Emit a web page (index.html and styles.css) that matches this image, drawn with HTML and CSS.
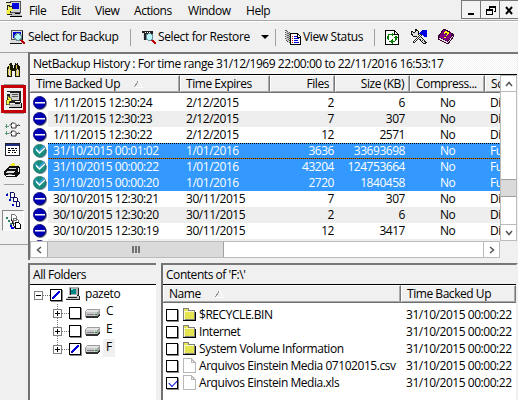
FILE: index.html
```html
<!DOCTYPE html>
<html lang="en">
<head>
<meta charset="utf-8">
<title>NetBackup</title>
<link rel="stylesheet" href="styles.css">
</head>
<body>
<svg class="defs" width="0" height="0">
  <defs>
    <pattern id="dither" width="2" height="2" patternUnits="userSpaceOnUse"><rect width="2" height="2" fill="#ff0"/><path d="M0 0h1v1H0zM1 1h1v1H1z" fill="#c8c8a0"/></pattern>
    <symbol id="bar" viewBox="0 0 14 14"><circle cx="7.5" cy="7.5" r="6.400" fill="#888"/><circle cx="6.6" cy="6.6" r="6.2" fill="#0000b4" stroke="#000068" stroke-width=".8"/><path d="M2 6h10v1.500H2z" fill="#fff"/></symbol>
    <symbol id="ok" viewBox="0 0 14 14"><circle cx="7.5" cy="7.5" r="6.400" fill="#66909c"/><circle cx="6.6" cy="6.6" r="6.2" fill="#159080" stroke="#267060" stroke-width=".8"/><path d="M2 3.5L6 7.500l5.500-6" fill="none" stroke="#4aa5e6" stroke-width="1.500"/><path d="M3 5.500l3.500 3.500L12 4" fill="none" stroke="#fff" stroke-width="1.300"/></symbol>
    <symbol id="drive" viewBox="0 0 16 10"><path d="M0 4l3-3h12v5l-3 3H0z" fill="#a0a0a0"/><path d="M0 4l3-3h12l-2 3z" fill="#e4e4e4"/><path d="M0 4h12v4H0z" fill="#c8c8c8"/><path d="M12 8l3-3v2l-3 3H1V8z" fill="#303030"/><path d="M2 6h7" stroke="#808080"/><path d="M10 6h2v1h-2z" fill="#208020"/><path d="M0 8V4l3-3h12" fill="none" stroke="#808080" stroke-width=".7"/></symbol>
    <symbol id="folder" viewBox="0 0 14 14"><path d="M1 12V3l1-2h4l1 2h5v9z" fill="url(#dither)" stroke="#808080"/><path d="M1 13h12V4" fill="none" stroke="#000"/><path d="M2 12V4h10" fill="none" stroke="#fff" stroke-width=".7"/></symbol>
    <symbol id="gfolder" viewBox="0 0 14 14"><path d="M1 12V3l1-2h4l1 2h5v9z" fill="url(#dither)" stroke="#808080"/><path d="M1 13h12V4" fill="none" stroke="#000"/><path d="M2 12V4h10" fill="none" stroke="#fff" stroke-width=".7"/></symbol>
    <symbol id="file" viewBox="0 0 13 15"><path d="M.5.5h8l4 4v10H.5zM8.500.5v4h4" fill="#fff" stroke="#b8b8b8"/></symbol>
    <symbol id="app" viewBox="0 0 16 16"><path d="M4 0h11v11H4z" fill="#d0d0d0"/><path d="M6 2h7v6H6z" fill="#0000e0"/><path d="M4 .5h11M14.500 1v10H5" fill="none" stroke="#555"/><path d="M3 12h12l1 3H5z" fill="#c0c0c0"/><path d="M4 15.500h12V12M9 12h5" fill="none" stroke="#000"/><path d="M0 2h6v2H0zM0 7h2v6H0z" fill="#e8e8b0"/><path d="M0 1.500h5M1 4l5 2v2l-2 1v3M1 13h5M1 5v7" stroke="#222" fill="none"/><path d="M2 5l4 2 1 2-3 1v3H1v-4l2-1z" fill="#f4f040"/></symbol>
    <symbol id="appdark" viewBox="0 0 16 16"><path d="M2 0h13v11H2z" fill="#222"/><path d="M5 2h8v6H5z" fill="#d0d0d0"/><path d="M7 3h5v1H7zM7 5h5v1H7z" fill="#555"/><path d="M3 12h12l1 3H5z" fill="#c0c0c0"/><path d="M4 15.500h12V11M9 12h5" fill="none" stroke="#000"/><path d="M0 1h5v2H0zM0 6h2v6H0z" fill="#eee"/><path d="M2 4l4 3 1 2-3 1v3H1V9l2-1z" fill="#f4f040" stroke="#222" stroke-width=".6"/><path d="M9 9h5v1H9z" fill="#fff"/></symbol>
    <symbol id="bino" viewBox="0 0 15 17"><path d="M3 1h3v2h1v3h1V3h1V1h3v2l2 2v10H9v-6H6v6H1V5l2-2z" fill="#181800"/><path d="M3 3h1v4H3zM10 3h1v4h-1zM2 7h1v6H2zM4 8h1v6H4zM10 8h1v6h-1zM12 8h1v6h-1z" fill="#d8c850"/><path d="M3 1h1v1H3zM10 1h1v1h-1zM3 7h1v7H3zM11 7h1v7h-1z" fill="#ddd"/></symbol>
    <symbol id="tree" viewBox="0 0 16 15"><path d="M0 4h4M1.500 2v4M0 11h4M1.500 9v4" stroke="#569a78"/><path d="M4.500 3h2V1h3l1.500 1.500V6H6.500V4M11 4h1l1-1h1l1 1M4.500 11h2V9h3l1.500 1.500V14H6.500v-2M11 12h1l1-1h1l1 1" fill="#fff" stroke="#333" shape-rendering="auto"/></symbol>
    <symbol id="cal" viewBox="0 0 15 13"><path d="M.5.5h14v12H.5z" fill="#fff" stroke="#223"/><path d="M1 1h13v2H1z" fill="#203080"/><path d="M3 5.500h2m1 0h3m1 0h2M3 7.500h3m1 0h3m1 0h1M3 9.500h2m2 0h1m1 0h2" stroke="#000"/></symbol>
    <symbol id="tape" viewBox="0 0 17 16"><path d="M2 6l3-3h9l2 2v5l-4 4H2l-2-2V9z" fill="#111"/><path d="M6 2l3-2 2 1-1 2zM13 3l3-2" fill="#ff0" stroke="#dd2" stroke-width=".6"/><path d="M5 5h8l-2 1H4zM3 8h8l-1 2H2z" fill="#ddd"/><path d="M2 12.500h9M14.500 5v4" stroke="#fff"/><path d="M4 11h4v1H4z" fill="#888"/></symbol>
    <symbol id="pages" viewBox="0 0 15 15"><path d="M4.500.5h3l1 1v4h-4zM7.500 5.500h3l1 1v3h-4zM10.500 9.500h2l1 1v4h-3z" fill="#fff" stroke="#101060"/><path d="M0 2h2v2H0zM3 7h2v2H3zM6 12h2v2H6z" fill="#0000d0"/><path d="M1 1h1v1H1zM4 6h1v1H4z" fill="#008080"/></symbol>
    <symbol id="pages2" viewBox="0 0 15 16"><path d="M5.500.5h3l2 2v4h-5zM7.500 4.500h3l2 2v3h-5z" fill="#fff" stroke="#777"/><path d="M9.500 8.500h3l2 2v4h-5z" fill="#fff" stroke="#000"/><path d="M0 3h2v2H0zM2 6h2v2H2zM4 9h2v2H4z" fill="#308070"/><path d="M4 11h2v2h2v2H5z" fill="#0000d0"/><path d="M5 5l4 9" stroke="#222"/></symbol>
    <symbol id="sel" viewBox="0 0 16 15"><path d="M1.500.5h11v9h-11z" fill="#ddd" stroke="#555"/><path d="M3 2h8v6H3z" fill="#0000d8"/><path d="M0 10h12v3H0z" fill="#ddd"/><path d="M0 13.500h12M12.500 1v9" stroke="#111"/><circle cx="8" cy="7" r="3.300" fill="#b9fafa" stroke="#6a8c9c"/><path d="M11 10l3.500 4" stroke="#c00000" stroke-width="2"/></symbol>
    <symbol id="selr" viewBox="0 0 15 15"><path d="M1 1h10v9H1z" fill="#ddd"/><path d="M0 .5h11v9H2V3H0z" fill="#222"/><path d="M3 2h1v1H3zM5 2h1v1H5zM7 2h1v1H7z" fill="#fff"/><circle cx="7.500" cy="7" r="3.300" fill="#b9fafa" stroke="#6a8c9c"/><path d="M10 10l3.500 4" stroke="#c00000" stroke-width="2"/></symbol>
    <symbol id="status" viewBox="0 0 16 15"><path d="M.5.500l4 2v10l-4-3z" fill="#bbb" stroke="#555" stroke-dasharray="1 1"/><path d="M2 3v6M3 3v7" stroke="#666" stroke-dasharray="1 1"/><path d="M5.500 3.500h7l3 3v8h-10z" fill="#fff" stroke="#000"/><path d="M9 6.500h3M9 8.500h5M9 10.500h4M9 12.500h5" stroke="#0000d8"/><path d="M7 6h1v1H7zM7 8h1v1H7zM7 10h1v1H7zM7 12h1v1H7z" fill="#d00"/><path d="M12 4v3h3" stroke="#000" fill="none"/></symbol>
    <symbol id="refresh" viewBox="0 0 14 15"><path d="M.5.5h9l4 4v10H.5z" fill="#fff" stroke="#000"/><path d="M9.500.5v4h4" fill="none" stroke="#000"/><path d="M3 8V6l1-1.500h3M11 7v3l-1.500 1.500H7" fill="none" stroke="#008000" stroke-width="1.300"/><path d="M6.500 2l3 2.500-3 2.500zM7.500 9v5l-3-2.500zM1.500 7.500h3.500L3.200 10zM9 8l2-2.500L13 8z" fill="#008000"/></symbol>
    <symbol id="tools" viewBox="0 0 17 16"><path d="M8 4l3-3h5v7h-2l-3-2H9z" fill="#0000e8"/><path d="M1 2l2 2 2-2-1-2 3 2v3l8 8-2 2-8-8H2L0 4z" fill="#ddd" stroke="#111"/><path d="M2 13l8-8 1 1-8 8z" fill="#fff" stroke="#222"/><path d="M5 9l1 1m0-2l1 1m0-2l1 1M9 10l1 1m1 0l1 1" stroke="#222"/><path d="M13 11l3 3-2 1z" fill="#222"/></symbol>
    <symbol id="book" viewBox="0 0 16 16"><path d="M6 0l9 5-5 8-10-5z" fill="#800080" stroke="#300030"/><path d="M0 8l10 5 5-7v2l-5 7L1 10z" fill="#ddd"/><path d="M0 8v2l10 5 6-8-1-2" fill="none" stroke="#400030" stroke-width="1"/><path d="M6 4l2-1 2 1v1L8 7M7 8v1" fill="none" stroke="#ff0" stroke-width="1.400"/></symbol>
    <symbol id="pc" viewBox="0 0 15 14"><path d="M3 0h9l1 1v7H3z" fill="#b0b0b0"/><path d="M5 2h5v5H5z" fill="#008888"/><path d="M5 2h2v1H5z" fill="#60ffff"/><path d="M12.500 1v7l-1 1H4M4 1v7" fill="none" stroke="#222"/><path d="M2 9h11v3H0z" fill="#c8c8c8"/><path d="M0 12.500h13.500V9M2 10.500h9" fill="none" stroke="#222"/></symbol>
    <symbol id="sort" viewBox="0 0 9 8"><path d="M.5 7L4.500.5" stroke="#909090" fill="none"/><path d="M4.500.5L8 7H.5" stroke="#fff" fill="none"/></symbol>
  </defs>
</svg>
<div class="window">
  <div class="menubar">
    <svg class="i-app"><use href="#app"/></svg>
    <span class="m1">File</span><span class="m2">Edit</span><span class="m3">View</span><span class="m4">Actions</span><span class="m5">Window</span><span class="m6">Help</span>
    <div class="winbtns">
      <i><svg width="18" height="18"><path d="M6 12h6v2H6z"/></svg></i>
      <i><svg width="18" height="18"><path d="M8 5h7v2H8zM8 5h1v3H8zM14 5h1v6h-2v-1h1zM5 8h7v2H5zM5 8h1v6H5zM11 8h1v6h-1zM5 13h7v1H5z"/></svg></i>
      <i><svg width="17" height="18"><path d="M6 6l6 7M12 6l-6 7" stroke="#000" stroke-width="2" shape-rendering="auto"/></svg></i>
    </div>
  </div>
  <div class="toolbar">
    <svg class="i-sel"><use href="#sel"/></svg><span class="t1">Select for Backup</span><b class="sep"></b>
    <svg class="i-selr"><use href="#selr"/></svg><span class="t2">Select for Restore</span><u class="arrow"></u><b class="sep"></b>
    <svg class="i-status"><use href="#status"/></svg><span class="t3">View Status</span><b class="sep"></b>
    <svg class="i-refresh"><use href="#refresh"/></svg><svg class="i-tools"><use href="#tools"/></svg><svg class="i-book"><use href="#book"/></svg>
  </div>
  <div class="body">
    <div class="side">
      <svg class="s-bino"><use href="#bino"/></svg>
      <hr>
      <div class="active"><svg><use href="#appdark"/></svg></div>
      <hr class="h2">
      <svg class="s-tree"><use href="#tree"/></svg>
      <svg class="s-cal"><use href="#cal"/></svg>
      <svg class="s-tape"><use href="#tape"/></svg>
      <hr class="h3">
      <svg class="s-pages"><use href="#pages"/></svg>
      <div class="pressed"><svg><use href="#pages2"/></svg></div>
    </div>
    <div class="main">
      <div class="history">
        <div class="title dots"><span>NetBackup History : For time range 31/12/1969 22:00:00 to 22/11/2016 16:53:17</span></div>
        <div class="grid">
          <div class="list">
            <div class="row head"><span class="c1">Time Backed Up<svg class="sort"><use href="#sort"/></svg></span><span class="c2">Time Expires</span><span class="c3">Files</span><span class="c4">Size (KB)</span><span class="c5">Compress...</span><span class="c6">Sc</span></div>
            <div class="rows">
              <div class="row"><svg><use href="#bar"/></svg><div class="cells"><span>1/11/2015 12:30:24</span><span>2/12/2015</span><span>2</span><span>6</span><span>No</span><span>Di</span></div></div>
              <div class="row alt"><svg><use href="#bar"/></svg><div class="cells"><span>1/11/2015 12:30:23</span><span>2/12/2015</span><span>7</span><span>307</span><span>No</span><span>Di</span></div></div>
              <div class="row"><svg><use href="#bar"/></svg><div class="cells"><span>1/11/2015 12:30:22</span><span>2/12/2015</span><span>12</span><span>2571</span><span>No</span><span>Di</span></div></div>
              <div class="row on focus"><svg><use href="#ok"/></svg><div class="cells"><span>31/10/2015 00:01:02</span><span>1/01/2016</span><span>3636</span><span>33693698</span><span>No</span><span>Fu</span></div></div>
              <div class="row on"><svg><use href="#ok"/></svg><div class="cells"><span>31/10/2015 00:00:22</span><span>1/01/2016</span><span>43204</span><span>124753664</span><span>No</span><span>Fu</span></div></div>
              <div class="row on"><svg><use href="#ok"/></svg><div class="cells"><span>31/10/2015 00:00:20</span><span>1/01/2016</span><span>2720</span><span>1840458</span><span>No</span><span>Fu</span></div></div>
              <div class="row"><svg><use href="#bar"/></svg><div class="cells"><span>30/10/2015 12:30:21</span><span>30/11/2015</span><span>7</span><span>307</span><span>No</span><span>Di</span></div></div>
              <div class="row alt"><svg><use href="#bar"/></svg><div class="cells"><span>30/10/2015 12:30:20</span><span>30/11/2015</span><span>2</span><span>6</span><span>No</span><span>Di</span></div></div>
              <div class="row"><svg><use href="#bar"/></svg><div class="cells"><span>30/10/2015 12:30:19</span><span>30/11/2015</span><span>12</span><span>3417</span><span>No</span><span>Di</span></div></div>
              <div class="row alt"><svg><use href="#bar"/></svg><div class="cells"></div></div>
            </div>
          </div>
          <div class="vbar"><div class="up"><svg width="8" height="6"><path d="M1 5l3-3.500L7 5"/></svg></div><div class="vthumb"></div><div class="down"><svg width="8" height="6"><path d="M1 1l3 3.500L7 1"/></svg></div></div>
        </div>
        <div class="hbar"><div class="left"><svg width="6" height="8"><path d="M5 1L1.500 4 5 7"/></svg></div><div class="hthumb"><i></i><i></i><i></i></div><div class="right"><svg width="6" height="8"><path d="M1 1l3.500 3L1 7"/></svg></div></div>
      </div>
      <div class="bottom">
        <div class="folders">
          <div class="title"><span>All Folders</span></div>
          <div class="treebox">
            <div class="node root"><em class="minus"></em><s></s><b class="cb part"></b><svg class="pc"><use href="#pc"/></svg><span>pazeto</span></div>
            <div class="kids">
              <div class="node"><em class="plus"></em><s></s><b class="cb"></b><svg class="drv"><use href="#drive"/></svg><span>C</span></div>
              <div class="node"><em class="plus"></em><s></s><b class="cb"></b><svg class="drv"><use href="#drive"/></svg><span>E</span></div>
              <div class="node"><em class="plus"></em><s></s><b class="cb part"></b><svg class="drv"><use href="#drive"/></svg><span class="hl">F</span></div>
            </div>
          </div>
        </div>
        <div class="contents">
          <div class="title"><span>Contents of 'F:\'</span></div>
          <div class="row head"><span class="n1">Name<svg class="sort"><use href="#sort"/></svg></span><span class="n2">Time Backed Up</span></div>
          <div class="files">
            <div class="f"><b class="cb"></b><svg><use href="#folder"/></svg><span class="nm">$RECYCLE.BIN</span><span class="dt">31/10/2015 00:00:22</span></div>
            <div class="f"><b class="cb"></b><svg><use href="#gfolder"/></svg><span class="nm">Internet</span><span class="dt">31/10/2015 00:00:22</span></div>
            <div class="f"><b class="cb"></b><svg><use href="#folder"/></svg><span class="nm">System Volume Information</span><span class="dt">31/10/2015 00:00:22</span></div>
            <div class="f"><b class="cb"></b><svg><use href="#file"/></svg><span class="nm">Arquivos Einstein Media 07102015.csv</span><span class="dt">31/10/2015 00:00:22</span></div>
            <div class="f"><b class="cb tick"></b><svg><use href="#file"/></svg><span class="nm">Arquivos Einstein Media.xls</span><span class="dt">31/10/2015 00:00:22</span></div>
          </div>
        </div>
      </div>
    </div>
  </div>
</div>
</body>
</html>
```
FILE: styles.css
```css
* { box-sizing: border-box; }
body { margin: 0; background: #f0f0f0; font: 12px/16px "Open Sans", "Noto Sans", sans-serif; letter-spacing: -0.45px; color: #000; white-space: nowrap; overflow: hidden; }
svg { display: block; flex: none; shape-rendering: crispEdges; }
.defs { position: absolute; }
.window { width: 518px; height: 400px; display: flex; flex-direction: column; }
span { flex: none; }

.menubar { height: 21px; flex: none; display: flex; align-items: center; border-bottom: 1px solid #a8a8a8; padding-left: 6px; }
.menubar span { padding-top: 1px; }
.i-app { width: 16px; height: 16px; margin-bottom: 2px; }
.m1 { width: 32px; margin-left: 7px; }
.m2 { width: 34px; }
.m3 { width: 39px; }
.m4 { width: 54px; }
.m5 { width: 58px; }
.winbtns { margin-left: auto; display: flex; height: 20px; align-self: flex-start; }
.winbtns i { width: 19px; height: 19px; border: 1px solid #777; border-left-width: 0; background: #f3f3f3; }
.winbtns i:first-child { border-left-width: 1px; width: 20px; }
.winbtns i:last-child { width: 18px; border-right: 0; }

.toolbar { height: 31px; flex: none; display: flex; align-items: center; border-top: 1px solid #fff; padding-left: 10px; letter-spacing: -0.37px; }
.sep { width: 1px; height: 17px; background: #a0a0a0; flex: none; }
.i-sel { width: 16px; height: 15px; }
.t1 { width: 102px; margin-left: 2px; }
.i-selr { width: 15px; height: 15px; margin-left: 11px; }
.t2 { width: 103px; margin-left: 1px; }
.arrow { border: 4px solid transparent; border-top-color: #000; border-bottom: 0; margin-right: 6px; }
.i-status { width: 16px; height: 15px; margin-left: 9px; }
.t3 { width: 71px; margin-left: 2px; }
.i-refresh { width: 14px; height: 15px; margin-left: 10px; }
.i-tools { width: 17px; height: 16px; margin-left: 12px; }
.i-book { width: 16px; height: 16px; margin-left: 10px; }

.body { flex: 1; display: flex; min-height: 0; }
.side { width: 28px; height: 193px; border-top: 1px solid #a0a0a0; border-bottom: 1px solid #a0a0a0; display: flex; flex-direction: column; flex: none; padding-top: 9px; }
.side hr { width: 20px; margin: 5px 0 0 4px; border: 0; height: 1px; background: #a0a0a0; flex: none; }
.s-bino { width: 15px; height: 17px; margin-left: 6px; }
.active { width: 25px; height: 28px; border: 3px solid #c40008; margin-left: 1px; padding: 3px 0 0 1px; flex: none; }
.active svg { width: 17px; height: 17px; }
.side .h2 { margin-top: 0; }
.s-tree { width: 16px; height: 15px; margin: 8px 0 0 5px; }
.s-cal { width: 15px; height: 13px; margin: 6px 0 0 5px; }
.s-tape { width: 17px; height: 16px; margin: 7px 0 0 4px; }
.s-pages { width: 15px; height: 15px; margin: 7px 0 0 6px; }
.pressed { width: 22px; height: 21px; margin: 3px 0 0 2px; border: 1px solid; border-color: #888 #fff #fff #888; padding: 3px 0 0 3px; flex: none; background: #f7f7f7; }
.pressed svg { width: 15px; height: 16px; }

.main { width: 490px; display: flex; flex-direction: column; flex: none; }
.history { height: 208px; width: 490px; border-left: 2px solid #707070; border-top: 2px solid #777; display: flex; flex-direction: column; background: #f0f0f0; flex: none; }
.title { height: 21px; border-bottom: 2px solid #000; padding: 1px 0 0 3px; flex: none; line-height: 17px; overflow: hidden; }
.dots { background: conic-gradient(#fff 25%, #f3f3f3 0 50%, #fff 0 75%, #f3f3f3 0) 0 0 / 2px 2px; width: 487px; border-bottom-width: 1px; }
.grid { display: flex; height: 166px; flex: none; }
.list { width: 470px; background: #fff; overflow: hidden; display: flex; flex-direction: column; }
.row { display: flex; flex: none; }
.head { height: 18px; background: #f0f0f0; border-bottom: 1px solid #707070; line-height: 16px; overflow: hidden; }
.head > span { height: 17px; border: 1px solid; border-color: #fff #777 #a8a8a8 #fff; box-shadow: inset -1px 0 #aaa; overflow: hidden; }
.head .sort { display: inline-block; width: 9px; height: 8px; margin-left: 14px; }
.c1 { width: 150px; padding-left: 5px; }
.c2 { width: 90px; padding-left: 5px; }
.c3 { width: 65px; text-align: right; padding-right: 5px; }
.c4 { width: 75px; text-align: right; padding-right: 5px; }
.c5 { width: 75px; padding-left: 5px; }
.c6 { width: 75px; padding-left: 5px; }
.rows { padding-top: 2px; height: 148px; overflow: hidden; }
.rows .row { height: 16px; padding-left: 2px; }
.rows svg { width: 14px; height: 14px; margin: 1px 1px 0 1px; shape-rendering: auto; }
.cells { display: grid; grid-template-columns: 133px 83px 65px 71px 51px 54px; width: 452px; flex: none; padding-left: 5px; letter-spacing: -0.46px; height: 16px; overflow: hidden; }
.cells span:nth-child(3), .cells span:nth-child(4) { text-align: right; }
.cells span:nth-child(5) { padding-left: 35px; }
.cells span:nth-child(6) { padding-left: 34px; }
.alt .cells { background: #eee; }
.on .cells { background: #3399ff; color: #fff; }
.focus .cells { background: repeating-linear-gradient(90deg, #000 0 1px, #3399ff 1px 2px) 0 0 / 100% 1px no-repeat, repeating-linear-gradient(90deg, #c60 0 1px, #222 1px 2px) 0 100% / 100% 1px no-repeat, #3399ff; }
.vbar { width: 17px; background: #fff; border: 1px solid #bbb; display: flex; flex-direction: column; }
.up, .down { height: 16px; display: flex; align-items: center; justify-content: center; border-bottom: 1px solid #bbb; flex: none; }
.down { border-bottom: 0; border-top: 1px solid #bbb; margin-top: auto; }
.vthumb { height: 18px; background: #dadada; border: 1px solid #a0a0a0; border-width: 1px 0; margin-top: 87px; }
.vbar svg path, .left path, .right path { fill: none; stroke: #555; stroke-width: 1.5; shape-rendering: auto; }
.hbar { width: 470px; height: 17px; background: #fff; border: 1px solid #bbb; display: flex; flex: none; }
.left, .right { width: 16px; display: flex; align-items: center; justify-content: center; flex: none; }
.right { margin-left: auto; border-left: 1px solid #bbb; }
.hthumb { width: 177px; background: #dadada; border: 1px solid #a0a0a0; border-width: 0 1px; display: flex; align-items: center; justify-content: center; gap: 1px; }
.hthumb i { width: 2px; height: 7px; background: #707070; }

.bottom { margin-top: 3px; display: flex; gap: 5px; flex: 1; min-height: 0; }
.folders, .contents { border-left: 2px solid #707070; border-top: 2px solid #777; background: #fff; display: flex; flex-direction: column; }
.folders { width: 128px; }
.contents { width: 357px; border-right: 2px solid #f0f0f0; }
.bottom .title { background: #f0f0f0; height: 20px; border-bottom-width: 1px; }
.treebox { padding: 1px 0 0 4px; }
.node { display: flex; align-items: center; height: 18px; }
.node em { width: 9px; height: 9px; border: 1px solid #808080; display: block; background: linear-gradient(#000, #000) center / 5px 1px no-repeat #fff; flex: none; }
.node em.plus { background: linear-gradient(#000, #000) center / 5px 1px no-repeat, linear-gradient(#000, #000) center / 1px 5px no-repeat #fff; }
.node s { width: 7px; border-top: 1px dotted #777; flex: none; }
.cb { display: block; width: 12px; height: 12px; border: 1px solid #000; box-shadow: 1px 1px #888; background: #fff; flex: none; }
.part { background: linear-gradient(135deg, transparent 42%, #0000e0 43% 57%, transparent 58%) center / 8px 8px no-repeat #fff; }
.tick { display: flex; }
.tick::after { content: ""; width: 7px; height: 4px; border-left: 1.5px solid #0000e0; border-bottom: 1.5px solid #0000e0; transform: rotate(-45deg); margin: 2px 0 0 1.5px; }
.pc { width: 15px; height: 14px; margin: 0 4px 2px; }
.node span { margin-bottom: 2px; }
.kids { margin-left: 19px; background: repeating-linear-gradient(#777 0 1px, #fff 1px 2px) 4px 0 / 1px 46px no-repeat; }
.drv { width: 16px; height: 10px; margin: 0 2px 1px 4px; }
.kids span { padding: 0 3px; height: 18px; }
.hl { background: #f0f0f0; }
.contents .head { height: 18px; flex: none; }
.n1 { width: 238px; padding-left: 5px; }
.n2 { width: 115px; padding-left: 5px; }
.files { padding-top: 3px; }
.f { display: flex; align-items: center; height: 17px; padding-left: 3px; }
.f svg { width: 14px; height: 15px; margin: 0 3px 0 4px; }
.nm { width: 207px; }
.dt { letter-spacing: -0.46px; }
```
